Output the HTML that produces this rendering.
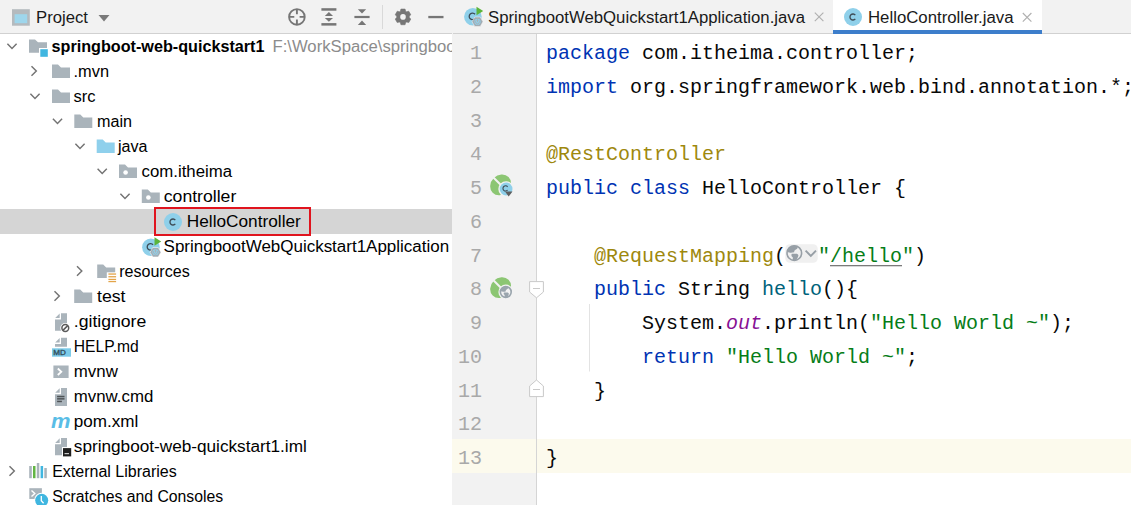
<!DOCTYPE html>
<html><head><meta charset="utf-8"><style>
html,body{margin:0;padding:0;width:1131px;height:505px;overflow:hidden;background:#fff}
svg{display:block}
text{font-family:'Liberation Sans', sans-serif}
.m{font-family:'Liberation Mono', monospace}
</style></head><body>
<svg width="1131" height="505" viewBox="0 0 1131 505">
<rect x="0" y="0" width="1131" height="505" fill="#ffffff"/>
<rect x="0" y="0" width="1131" height="33" fill="#f2f2f2"/>
<rect x="0" y="33" width="1131" height="1" fill="#d1d1d1"/>
<rect x="833" y="0" width="209" height="33" fill="#ffffff"/>
<rect x="833" y="30" width="209" height="4" fill="#3d7ecb"/>
<rect x="452" y="34" width="84" height="471" fill="#f2f2f2"/>
<rect x="452" y="439" width="679" height="34" fill="#fcfaed"/>
<rect x="536" y="34" width="1" height="471" fill="#d5d5d5"/>
<rect x="12" y="9.2" width="17.8" height="16.5" fill="#b4babe"/>
<rect x="14.6" y="14.2" width="12.6" height="9" fill="#9ed6ec"/>
<text x="36" y="23" font-size="16" fill="#1a1a1a" font-weight="normal" font-style="normal" textLength="52" lengthAdjust="spacingAndGlyphs" >Project</text>
<path d="M98.5 15 H109.5 L104 21.5 Z" fill="#7a7a7a"/>
<circle cx="296.9" cy="16.9" r="7.8" fill="none" stroke="#767676" stroke-width="1.9"/>
<path d="M296.9 9.5 V14.3 M296.9 19.6 V24.3 M289.6 16.9 H294.3 M299.6 16.9 H304.3" stroke="#767676" stroke-width="1.9"/>
<g fill="#767676"><rect x="321.4" y="8.2" width="15" height="2.5"/><rect x="321.4" y="23.1" width="15" height="2.5"/><path d="M324.8 15.9 L328.9 12 L333 15.9 Z"/><path d="M324.8 17.9 L328.9 21.8 L333 17.9 Z"/></g>
<g fill="#767676"><rect x="354.4" y="15.9" width="15.2" height="2.2"/><path d="M357.8 9.2 L366.2 9.2 L362 13.4 Z"/><path d="M357.8 24.9 L366.2 24.9 L362 20.5 Z"/></g>
<rect x="382" y="5" width="1" height="24" fill="#d9d9d9"/>
<polygon points="400.43,11.15 400.92,9.07 405.08,9.07 405.57,11.15 406.70,11.80 408.74,11.18 410.82,14.79 409.27,16.25 409.27,17.55 410.82,19.01 408.74,22.62 406.70,22.00 405.57,22.65 405.08,24.73 400.92,24.73 400.43,22.65 399.30,22.00 397.26,22.62 395.18,19.01 396.73,17.55 396.73,16.25 395.18,14.79 397.26,11.18 399.30,11.80" fill="#767676" stroke="#767676" stroke-width="0.6" stroke-linejoin="round"/>
<circle cx="403" cy="16.9" r="2.8" fill="#f2f2f2"/>
<rect x="428.3" y="15.9" width="15.2" height="2.3" fill="#767676"/>
<rect x="452" y="33" width="1" height="1" fill="#f2f2f2"/>
<circle cx="472.9" cy="16.7" r="8.8" fill="#8fd0ea"/>
<path d="M475.04 14.29 A3.3 3.3 0 1 0 475.04 18.51" fill="none" stroke="#3d4b55" stroke-width="1.3"/>
<path d="M476.5 6.8 L483.2 11.1 L476.5 15.3 Z" fill="#5bb43a"/>
<polygon points="483.00,21.75 480.25,26.51 474.75,26.51 472.00,21.75 474.75,16.99 480.25,16.99" fill="#a3acb3" stroke="#f2f2f2" stroke-width="0.7" stroke-opacity="0.8"/>
<circle cx="477.5" cy="21.75" r="3.1" fill="#8fd0ea"/>
<path d="M476.20 20.25 A2 2 0 1 0 478.80 20.25 M477.5 19.15 V22.05" fill="none" stroke="#a9b1b8" stroke-width="1"/>
<text x="488" y="23" font-size="16" fill="#1a1a1a" font-weight="normal" font-style="normal" textLength="317" lengthAdjust="spacingAndGlyphs" >SpringbootWebQuickstart1Application.java</text>
<path d="M814.8 12.6 L823.4 21.2 M823.4 12.6 L814.8 21.2" stroke="#b0b0b0" stroke-width="1.15"/>
<circle cx="853" cy="17" r="9" fill="#8fd0ea"/>
<path d="M855.3 15.1 A3 3 0 1 0 855.3 18.9" fill="none" stroke="#3d4b55" stroke-width="1.35"/>
<text x="868" y="23" font-size="16" fill="#1a1a1a" font-weight="normal" font-style="normal" textLength="145.5" lengthAdjust="spacingAndGlyphs" >HelloController.java</text>
<path d="M1022.8 13 L1031.3999999999999 21.6 M1031.3999999999999 13 L1022.8 21.6" stroke="#b0b0b0" stroke-width="1.15"/>
<rect x="0" y="209" width="452" height="25" fill="#d5d5d5"/>
<rect x="155" y="208" width="155" height="27" fill="none" stroke="#e0141e" stroke-width="2"/>
<path d="M7.4 43.7 L12 48.4 L16.6 43.7" fill="none" stroke="#737373" stroke-width="1.45"/>
<path d="M29 39.5 H35 L38 42.3 H47 V52.8 H29 Z" fill="#aab4bb"/>
<rect x="39" y="48" width="10" height="10" fill="#ffffff"/>
<rect x="40.3" y="49.2" width="7.5" height="7.6" fill="#40b6e0"/>
<text x="51.5" y="52" font-size="16" fill="#000" font-weight="bold" font-style="normal" textLength="213" lengthAdjust="spacingAndGlyphs" >springboot-web-quickstart1</text>
<svg x="0" y="34" width="452" height="25" overflow="hidden">
<text x="272.5" y="18" font-size="16" fill="#8c8c8c" font-weight="normal" font-style="normal" textLength="310" lengthAdjust="spacingAndGlyphs" >F:\WorkSpace\springboot-web-quickstart1</text>
</svg>
<path d="M31.5 66.3 L36.3 71.0 L31.5 75.7" fill="none" stroke="#737373" stroke-width="1.45"/>
<path d="M52 64.4 H58 L61 67.4 H70 V78.0 H52 Z" fill="#aab4bb"/>
<text x="73.5" y="77" font-size="16" fill="#000" font-weight="normal" font-style="normal" textLength="35.5" lengthAdjust="spacingAndGlyphs" >.mvn</text>
<path d="M30.4 93.69999999999999 L35 98.39999999999999 L39.6 93.69999999999999" fill="none" stroke="#737373" stroke-width="1.45"/>
<path d="M52 89.4 H58 L61 92.4 H70 V103.0 H52 Z" fill="#aab4bb"/>
<text x="73.5" y="102" font-size="16" fill="#000" font-weight="normal" font-style="normal" textLength="22" lengthAdjust="spacingAndGlyphs" >src</text>
<path d="M52.9 118.69999999999999 L57.5 123.39999999999999 L62.1 118.69999999999999" fill="none" stroke="#737373" stroke-width="1.45"/>
<path d="M74.3 114.4 H80.3 L83.3 117.4 H92.3 V128.0 H74.3 Z" fill="#aab4bb"/>
<text x="97" y="127" font-size="16" fill="#000" font-weight="normal" font-style="normal" textLength="35" lengthAdjust="spacingAndGlyphs" >main</text>
<path d="M75.4 143.7 L80 148.4 L84.6 143.7" fill="none" stroke="#737373" stroke-width="1.45"/>
<path d="M96.7 139.4 H102.7 L105.7 142.4 H114.7 V153.0 H96.7 Z" fill="#8fd0ec"/>
<text x="118" y="152" font-size="16" fill="#000" font-weight="normal" font-style="normal" textLength="29.5" lengthAdjust="spacingAndGlyphs" >java</text>
<path d="M97.60000000000001 168.7 L102.2 173.4 L106.8 168.7" fill="none" stroke="#737373" stroke-width="1.45"/>
<path d="M119 164.4 H125 L128 167.4 H137 V178.0 H119 Z" fill="#aab4bb"/>
<circle cx="125.6" cy="172.5" r="2.3" fill="#ffffff"/>
<text x="141.6" y="177" font-size="16" fill="#000" font-weight="normal" font-style="normal" textLength="90.5" lengthAdjust="spacingAndGlyphs" >com.itheima</text>
<path d="M120.4 193.7 L125 198.4 L129.6 193.7" fill="none" stroke="#737373" stroke-width="1.45"/>
<path d="M141.8 189.4 H147.8 L150.8 192.4 H159.8 V203.0 H141.8 Z" fill="#aab4bb"/>
<circle cx="148.4" cy="197.5" r="2.3" fill="#ffffff"/>
<text x="163.8" y="202" font-size="16" fill="#000" font-weight="normal" font-style="normal" textLength="72.5" lengthAdjust="spacingAndGlyphs" >controller</text>
<circle cx="173" cy="222" r="9" fill="#8fd0ea"/>
<path d="M175.3 220.1 A3 3 0 1 0 175.3 223.9" fill="none" stroke="#3d4b55" stroke-width="1.35"/>
<text x="186.8" y="227" font-size="16" fill="#000" font-weight="normal" font-style="normal" textLength="114" lengthAdjust="spacingAndGlyphs" >HelloController</text>
<circle cx="150.9" cy="247.2" r="8.8" fill="#8fd0ea"/>
<path d="M153.04 244.79 A3.3 3.3 0 1 0 153.04 249.01" fill="none" stroke="#3d4b55" stroke-width="1.3"/>
<path d="M154.5 237.3 L161.2 241.6 L154.5 245.8 Z" fill="#5bb43a"/>
<polygon points="161.00,252.25 158.25,257.01 152.75,257.01 150.00,252.25 152.75,247.49 158.25,247.49" fill="#a3acb3" stroke="#ffffff" stroke-width="0.7" stroke-opacity="0.8"/>
<circle cx="155.5" cy="252.25" r="3.1" fill="#8fd0ea"/>
<path d="M154.20 250.75 A2 2 0 1 0 156.80 250.75 M155.5 249.65 V252.55" fill="none" stroke="#a9b1b8" stroke-width="1"/>
<text x="163.6" y="252" font-size="16" fill="#000" font-weight="normal" font-style="normal" textLength="285.5" lengthAdjust="spacingAndGlyphs" >SpringbootWebQuickstart1Application</text>
<path d="M77.0 266.3 L81.8 271.0 L77.0 275.7" fill="none" stroke="#737373" stroke-width="1.45"/>
<path d="M97.2 264.4 H103.2 L106.2 267.4 H115.2 V278.0 H97.2 Z" fill="#aab4bb"/>
<rect x="106.8" y="272.3" width="11" height="10.5" fill="#ffffff"/>
<g fill="#e3a449"><rect x="108.4" y="273.4" width="7.7" height="1.3"/><rect x="108.4" y="276.1" width="7.7" height="1.3"/><rect x="108.4" y="278.8" width="7.7" height="1.3"/><rect x="108.4" y="281" width="7.7" height="1.2"/></g>
<text x="119.2" y="277" font-size="16" fill="#000" font-weight="normal" font-style="normal" textLength="70.5" lengthAdjust="spacingAndGlyphs" >resources</text>
<path d="M54.5 291.3 L59.3 296.0 L54.5 300.7" fill="none" stroke="#737373" stroke-width="1.45"/>
<path d="M74.2 289.4 H80.2 L83.2 292.4 H92.2 V303.0 H74.2 Z" fill="#aab4bb"/>
<text x="97" y="302" font-size="16" fill="#000" font-weight="normal" font-style="normal" textLength="28.5" lengthAdjust="spacingAndGlyphs" >test</text>
<path d="M61 313.3 H67 V330.8 H55 V319.5 H61 Z" fill="#aab4bb"/>
<path d="M55.2 318.1 L59.7 313.5 V318.1 Z" fill="#aab4bb"/>
<circle cx="65.3" cy="328" r="5" fill="#ffffff"/>
<circle cx="65.3" cy="328" r="3.4" fill="none" stroke="#5a5a5a" stroke-width="1.5"/><path d="M62.9 330.4 L67.7 325.6" stroke="#5a5a5a" stroke-width="1.5"/>
<text x="73.8" y="327" font-size="16" fill="#000" font-weight="normal" font-style="normal" textLength="72.5" lengthAdjust="spacingAndGlyphs" >.gitignore</text>
<path d="M61 337.7 H67 V346.7 H55 V343.9 H61 Z" fill="#aab4bb"/>
<path d="M55.2 342.5 L59.7 337.9 V342.5 Z" fill="#aab4bb"/>
<rect x="52" y="348.3" width="19" height="8.4" fill="#7ccbe8"/>
<text x="53.3" y="355.2" font-size="7.2" fill="#34505f" font-weight="normal" font-style="normal" textLength="12.6" lengthAdjust="spacingAndGlyphs" stroke="#34505f" stroke-width="0.35">MD</text>
<text x="73.8" y="352" font-size="16" fill="#000" font-weight="normal" font-style="normal" textLength="65" lengthAdjust="spacingAndGlyphs" >HELP.md</text>
<rect x="53.4" y="365.5" width="15.2" height="12.5" fill="#aab4bb"/>
<path d="M57.8 368.5 L61.3 371.8 L57.8 375" fill="none" stroke="#ffffff" stroke-width="1.8"/>
<text x="73.8" y="377" font-size="16" fill="#000" font-weight="normal" font-style="normal" textLength="44" lengthAdjust="spacingAndGlyphs" >mvnw</text>
<path d="M61 388 H67 V405.9 H55 V394.2 H61 Z" fill="#aab4bb"/>
<path d="M55.2 392.8 L59.7 388.2 V392.8 Z" fill="#aab4bb"/>
<g fill="#4e5356"><rect x="57.1" y="395.8" width="7.4" height="1.5"/><rect x="57.1" y="398.1" width="7.4" height="1.5"/><rect x="57.1" y="400.7" width="4.8" height="1.5"/></g>
<text x="73.8" y="402" font-size="16" fill="#000" font-weight="normal" font-style="normal" textLength="79.5" lengthAdjust="spacingAndGlyphs" >mvnw.cmd</text>
<text x="51" y="428.4" font-size="21" fill="#59bde6" font-weight="bold" font-style="italic" textLength="19.5" lengthAdjust="spacingAndGlyphs" >m</text>
<text x="73.8" y="427" font-size="16" fill="#000" font-weight="normal" font-style="normal" textLength="64.5" lengthAdjust="spacingAndGlyphs" >pom.xml</text>
<path d="M61 438.1 H67 V455.3 H55 V444.3 H61 Z" fill="#aab4bb"/>
<path d="M55.2 442.90000000000003 L59.7 438.3 V442.90000000000003 Z" fill="#aab4bb"/>
<rect x="62" y="447" width="10.2" height="10.4" fill="#ffffff"/>
<rect x="63" y="448.1" width="8.2" height="8.3" fill="#1f1f1f"/>
<rect x="64.5" y="453" width="4.5" height="1.2" fill="#c8c8c8"/>
<text x="73.8" y="452" font-size="16" fill="#000" font-weight="normal" font-style="normal" textLength="233" lengthAdjust="spacingAndGlyphs" >springboot-web-quickstart1.iml</text>
<path d="M9.5 466.3 L14.3 471.0 L9.5 475.7" fill="none" stroke="#737373" stroke-width="1.45"/>
<g><rect x="29.2" y="466" width="2.6" height="12.2" fill="#aab4bb"/><rect x="33" y="466" width="2.5" height="12.2" fill="#62b543"/><rect x="36.8" y="463" width="2.5" height="15.2" fill="#aab4bb"/><rect x="40.6" y="466" width="2.5" height="12.2" fill="#40b6e0"/><rect x="44.3" y="468" width="2.5" height="10.2" fill="#aab4bb"/></g>
<text x="52.2" y="477" font-size="16" fill="#000" font-weight="normal" font-style="normal" textLength="124.5" lengthAdjust="spacingAndGlyphs" >External Libraries</text>
<rect x="29.3" y="488.2" width="12.6" height="10.8" fill="#aab4bb"/>
<path d="M31.5 490.5 L34.8 493.5 L31.5 496.5" fill="none" stroke="#ffffff" stroke-width="1.4"/>
<circle cx="41.7" cy="500.3" r="7.6" fill="#ffffff"/>
<circle cx="41.7" cy="500.3" r="6.5" fill="#40b6e0"/>
<path d="M41.3 496 V500.8 L43.6 503.3" fill="none" stroke="#ffffff" stroke-width="1.3"/>
<text x="52.2" y="502" font-size="16" fill="#000" font-weight="normal" font-style="normal" textLength="171" lengthAdjust="spacingAndGlyphs" >Scratches and Consoles</text>
<text x="470" y="59.0" font-size="20" fill="#a9a9a9" font-weight="normal" font-style="normal" class="m">1</text>
<text x="470" y="92.75" font-size="20" fill="#a9a9a9" font-weight="normal" font-style="normal" class="m">2</text>
<text x="470" y="126.5" font-size="20" fill="#a9a9a9" font-weight="normal" font-style="normal" class="m">3</text>
<text x="470" y="160.25" font-size="20" fill="#a9a9a9" font-weight="normal" font-style="normal" class="m">4</text>
<text x="470" y="194.0" font-size="20" fill="#a9a9a9" font-weight="normal" font-style="normal" class="m">5</text>
<text x="470" y="227.75" font-size="20" fill="#a9a9a9" font-weight="normal" font-style="normal" class="m">6</text>
<text x="470" y="261.5" font-size="20" fill="#a9a9a9" font-weight="normal" font-style="normal" class="m">7</text>
<text x="470" y="295.25" font-size="20" fill="#a9a9a9" font-weight="normal" font-style="normal" class="m">8</text>
<text x="470" y="329.0" font-size="20" fill="#a9a9a9" font-weight="normal" font-style="normal" class="m">9</text>
<text x="458" y="362.75" font-size="20" fill="#a9a9a9" font-weight="normal" font-style="normal" class="m">10</text>
<text x="458" y="396.5" font-size="20" fill="#a9a9a9" font-weight="normal" font-style="normal" class="m">11</text>
<text x="458" y="430.25" font-size="20" fill="#a9a9a9" font-weight="normal" font-style="normal" class="m">12</text>
<text x="458" y="464.0" font-size="20" fill="#a9a9a9" font-weight="normal" font-style="normal" class="m">13</text>
<g transform="translate(489.9,174)"><ellipse cx="10.7" cy="10.9" rx="11.2" ry="9.6" transform="rotate(-45 10.7 10.9)" fill="#8cc673"/><path d="M3 3 L12 12" stroke="#f2f2f2" stroke-width="2"/></g>
<circle cx="506.1" cy="189" r="7.8" fill="#f2f2f2"/>
<circle cx="506.1" cy="189" r="6.4" fill="#8fd0ea"/>
<path d="M507.6 186.8 A2.6 2.6 0 1 0 507.6 190.0" fill="none" stroke="#3d4b55" stroke-width="1.1"/>
<path d="M505 191.4 L512.5 191.4 L508.7 196.5 Z" fill="#5f5f5f"/>
<g transform="translate(489.9,276.7)"><ellipse cx="10.7" cy="10.9" rx="11.2" ry="9.6" transform="rotate(-45 10.7 10.9)" fill="#8cc673"/><path d="M3 3 L12 12" stroke="#f2f2f2" stroke-width="2"/></g>
<circle cx="505.8" cy="292" r="7.4" fill="#f2f2f2"/>
<circle cx="505.8" cy="292" r="5.4" fill="none" stroke="#9aa5ad" stroke-width="1.6"/>
<path d="M500.22 291.07 Q501.15 287.35 505.03 286.26 L508.12 286.57 Q508.90 288.51 506.96 289.29 Q505.41 290.06 505.65 291.38 Q503.48 292.00 501.93 291.61 Z" fill="#9aa5ad"/>
<path d="M503.86 292.46 L507.74 292.46 Q509.68 293.16 508.51 295.10 L507.19 297.89 Q505.80 298.20 504.64 297.89 L504.64 295.10 Q503.09 294.32 503.86 292.46 Z" fill="#9aa5ad"/>
<path d="M529.6 281.6 H543.4 V292 L536.5 297.8 L529.6 292 Z" fill="#ffffff" stroke="#c9c9c9" stroke-width="1"/>
<rect x="533" y="288" width="7" height="1" fill="#c9c9c9"/>
<path d="M529.6 396.6 H543.4 V386 L536.5 380 L529.6 386 Z" fill="#ffffff" stroke="#c9c9c9" stroke-width="1"/>
<rect x="533" y="389" width="7" height="1" fill="#c9c9c9"/>
<rect x="589" y="304" width="1" height="67.5" fill="#e3e3e3"/>
<text x="546" y="59.0" font-size="20" fill="#0033b3" font-style="normal" class="m" xml:space="preserve">package</text><text x="630" y="59.0" font-size="20" fill="#080808" font-style="normal" class="m" xml:space="preserve"> com.itheima.controller;</text>
<text x="546" y="92.75" font-size="20" fill="#0033b3" font-style="normal" class="m" xml:space="preserve">import</text><text x="618" y="92.75" font-size="20" fill="#080808" font-style="normal" class="m" xml:space="preserve"> org.springframework.web.bind.annotation.*;</text>
<text x="546" y="160.25" font-size="20" fill="#9e880d" font-style="normal" class="m" xml:space="preserve">@RestController</text>
<text x="546" y="194.0" font-size="20" fill="#0033b3" font-style="normal" class="m" xml:space="preserve">public class</text><text x="690" y="194.0" font-size="20" fill="#080808" font-style="normal" class="m" xml:space="preserve"> HelloController {</text>
<text x="546" y="261.5" font-size="20" fill="#9e880d" font-style="normal" class="m" xml:space="preserve">    @RequestMapping</text><text x="774" y="261.5" font-size="20" fill="#080808" font-style="normal" class="m" xml:space="preserve">(</text>
<rect x="785.3" y="244.2" width="32.4" height="18.5" rx="4.5" fill="#f0f0f0"/>
<circle cx="794.3" cy="253.1" r="7.3" fill="none" stroke="#979fa6" stroke-width="1.6"/>
<path d="M787.01 251.88 Q788.22 247.03 793.29 245.61 L797.34 246.01 Q798.35 248.54 795.82 249.56 Q793.79 250.57 794.10 252.29 Q791.26 253.10 789.24 252.59 Z" fill="#979fa6"/>
<path d="M791.77 253.71 L796.83 253.71 Q799.36 254.62 797.84 257.15 L796.12 260.80 Q794.30 261.20 792.78 260.80 L792.78 257.15 Q790.76 256.14 791.77 253.71 Z" fill="#979fa6"/>
<path d="M805.6 250.7 L810.8 256 L816 250.7" fill="none" stroke="#979fa6" stroke-width="1.9"/>
<text x="818" y="261.5" font-size="20" class="m" xml:space="preserve"><tspan fill="#067d17">"/hello"</tspan><tspan fill="#080808">)</tspan></text>
<rect x="830" y="265" width="72" height="1.3" fill="#7a7a7a"/>
<text x="546" y="295.25" font-size="20" fill="#0033b3" font-style="normal" class="m" xml:space="preserve">    public</text><text x="666" y="295.25" font-size="20" fill="#080808" font-style="normal" class="m" xml:space="preserve"> String </text><text x="762" y="295.25" font-size="20" fill="#00627a" font-style="normal" class="m" xml:space="preserve">hello</text><text x="822" y="295.25" font-size="20" fill="#080808" font-style="normal" class="m" xml:space="preserve">(){</text>
<text x="546" y="329.0" font-size="20" fill="#080808" font-style="normal" class="m" xml:space="preserve">        System.</text><text x="726" y="329.0" font-size="20" fill="#871094" font-style="italic" class="m" xml:space="preserve">out</text><text x="762" y="329.0" font-size="20" fill="#080808" font-style="normal" class="m" xml:space="preserve">.println(</text><text x="870" y="329.0" font-size="20" fill="#067d17" font-style="normal" class="m" xml:space="preserve">"Hello World ~"</text><text x="1050" y="329.0" font-size="20" fill="#080808" font-style="normal" class="m" xml:space="preserve">);</text>
<text x="546" y="362.75" font-size="20" fill="#0033b3" font-style="normal" class="m" xml:space="preserve">        return</text><text x="726" y="362.75" font-size="20" fill="#067d17" font-style="normal" class="m" xml:space="preserve">"Hello World ~"</text><text x="906" y="362.75" font-size="20" fill="#080808" font-style="normal" class="m" xml:space="preserve">;</text>
<text x="546" y="396.5" font-size="20" fill="#080808" font-style="normal" class="m" xml:space="preserve">    }</text>
<text x="546" y="464.0" font-size="20" fill="#080808" font-style="normal" class="m" xml:space="preserve">}</text>
</svg>
</body></html>
